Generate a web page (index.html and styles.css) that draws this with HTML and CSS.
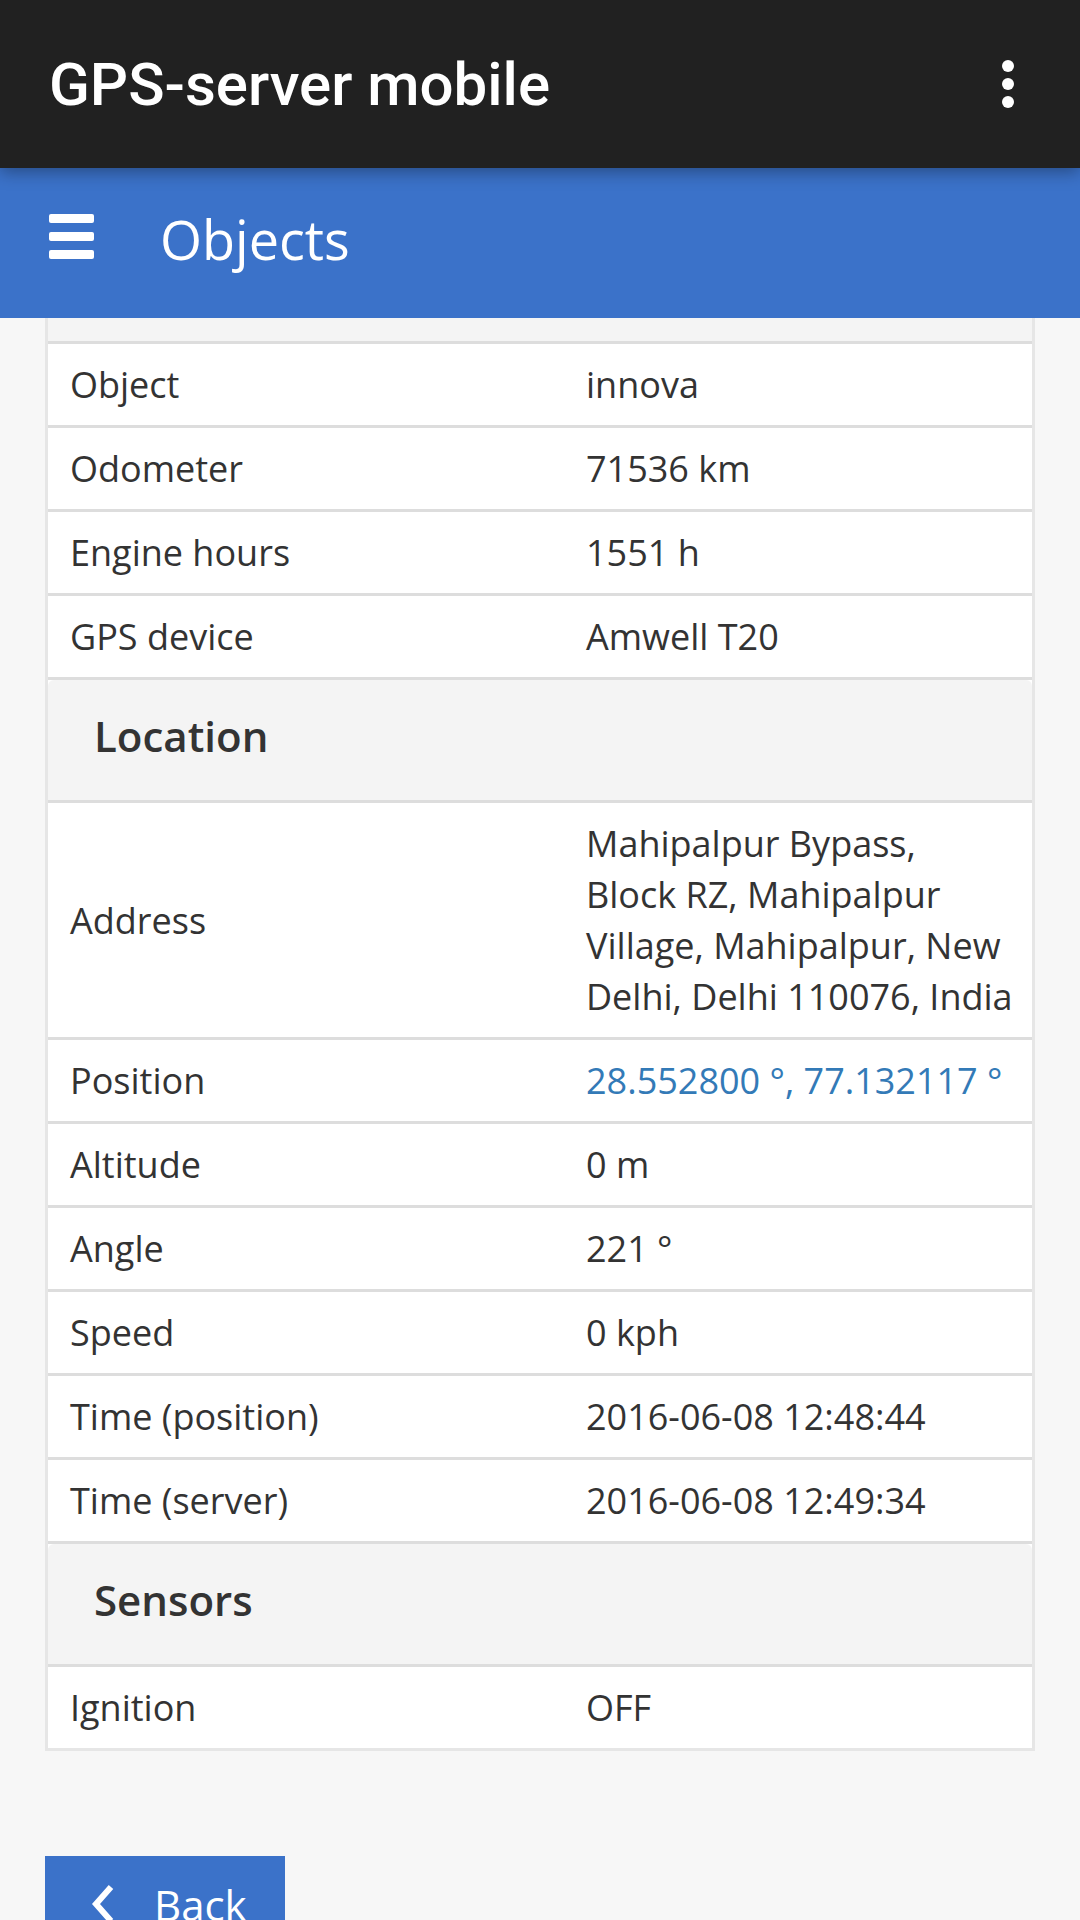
FILE: index.html
```html
<!DOCTYPE html>
<html lang="en-US">
<head>
  <meta http-equiv="Content-Type" content="text/html; charset=UTF-8">
  <title>GPS-server mobile</title>
  <meta name="viewport" content="width=device-width, initial-scale=1">
  <link rel="stylesheet" href="styles.css">
</head>
<body>
  <div class="appbar">
    <span class="app-title">GPS-server mobile</span>
    <span class="overflow"><i></i><i></i><i></i></span>
  </div>

  <div class="pagebar">
    <span class="burger"><i></i><i></i><i></i></span>
    <span class="page-title">Objects</span>
  </div>

  <div id="content">
    <div class="card">
      <div class="section cut"></div>

      <div class="row"><div class="key">Object</div><div class="val">innova</div></div>
      <div class="row"><div class="key">Odometer</div><div class="val">71536 km</div></div>
      <div class="row"><div class="key">Engine hours</div><div class="val">1551 h</div></div>
      <div class="row"><div class="key">GPS device</div><div class="val">Amwell T20</div></div>

      <div class="section">Location</div>

      <div class="row">
        <div class="key">Address</div>
        <div class="val address">Mahipalpur Bypass,<br>Block RZ, Mahipalpur<br>Village, Mahipalpur, New<br>Delhi, Delhi 110076, India</div>
      </div>
      <div class="row"><div class="key">Position</div><div class="val"><a class="link">28.552800 °, 77.132117 °</a></div></div>
      <div class="row"><div class="key">Altitude</div><div class="val">0 m</div></div>
      <div class="row"><div class="key">Angle</div><div class="val">221 °</div></div>
      <div class="row"><div class="key">Speed</div><div class="val">0 kph</div></div>
      <div class="row"><div class="key">Time (position)</div><div class="val">2016-06-08 12:48:44</div></div>
      <div class="row"><div class="key">Time (server)</div><div class="val">2016-06-08 12:49:34</div></div>

      <div class="section">Sensors</div>

      <div class="row last"><div class="key">Ignition</div><div class="val">OFF</div></div>
    </div>

    <a class="back-btn">
      <svg class="chevron" width="26" height="40" viewBox="0 0 26 40"><path d="M21 3 L6 20 L21 37" fill="none" stroke="#fff" stroke-width="6"/></svg>
      <span>Back</span>
    </a>
  </div>
</body>
</html>
```

FILE: styles.css
```css
body {
  margin: 0;
  padding: 0;
  background: #f7f7f7;
  font-family: "Open Sans", "Liberation Sans", sans-serif;
  color: #333;
}

/* top app bar */

.appbar {
  position: relative;
  z-index: 2;
  height: 168px;
  box-sizing: border-box;
  padding: 0 66px 0 49px;
  display: flex;
  align-items: center;
  justify-content: space-between;
  background: #212121;
  box-shadow: 0 4px 16px rgba(0,0,0,.35);
}
.app-title {
  font-family: Roboto, "Liberation Sans", sans-serif;
  font-weight: 500;
  font-size: 60px;
  color: #fff;
}
.overflow {
  display: flex;
  flex-direction: column;
  gap: 6px;
}
.overflow i {
  display: block;
  width: 12px;
  height: 12px;
  border-radius: 50%;
  background: #fff;
}

/* page bar */

.pagebar {
  position: relative;
  z-index: 1;
  height: 150px;
  box-sizing: border-box;
  padding-left: 49px;
  display: flex;
  align-items: center;
  background: #3b72c9;
}
.burger {
  display: flex;
  flex-direction: column;
  gap: 9px;
  margin-top: -13px;
  margin-right: 66px;
}
.burger i {
  display: block;
  width: 45px;
  height: 9px;
  border-radius: 2px;
  background: #fff;
}
.page-title {
  font-size: 54px;
  color: #fff;
  margin-top: -8px;
}

/* details card */

#content {
  padding: 0 45px;
}
.card {
  background: #fff;
  border: 3px solid #e6e6e6;
  border-top: none;
}
.section {
  height: 123px;
  box-sizing: border-box;
  padding: 0 0 10px 46px;
  display: flex;
  align-items: center;
  background: #f4f4f4;
  border-bottom: 3px solid #ddd;
  border-radius: 6px 6px 0 0;
  font-size: 42px;
  font-weight: 600;
}
.section.cut {
  height: 26px;
  padding: 0;
  border-radius: 0;
}
.row {
  display: grid;
  grid-template-columns: 516px 1fr;
  align-items: center;
  border-bottom: 3px solid #ddd;
  font-size: 36px;
  line-height: 51px;
}
.row.last {
  border-bottom: none;
}
.key, .val {
  padding: 15px 21px 15px 22px;
}
.address {
  white-space: nowrap;
}
.link {
  color: #337ab7;
  text-decoration: none;
}

/* back button */

.back-btn {
  margin-top: 105px;
  width: 240px;
  height: 96px;
  box-sizing: border-box;
  padding-left: 45px;
  display: flex;
  align-items: center;
  gap: 38px;
  background: #3b72c9;
  color: #fff;
  font-size: 42px;
}
.chevron {
  flex: none;
}
```
